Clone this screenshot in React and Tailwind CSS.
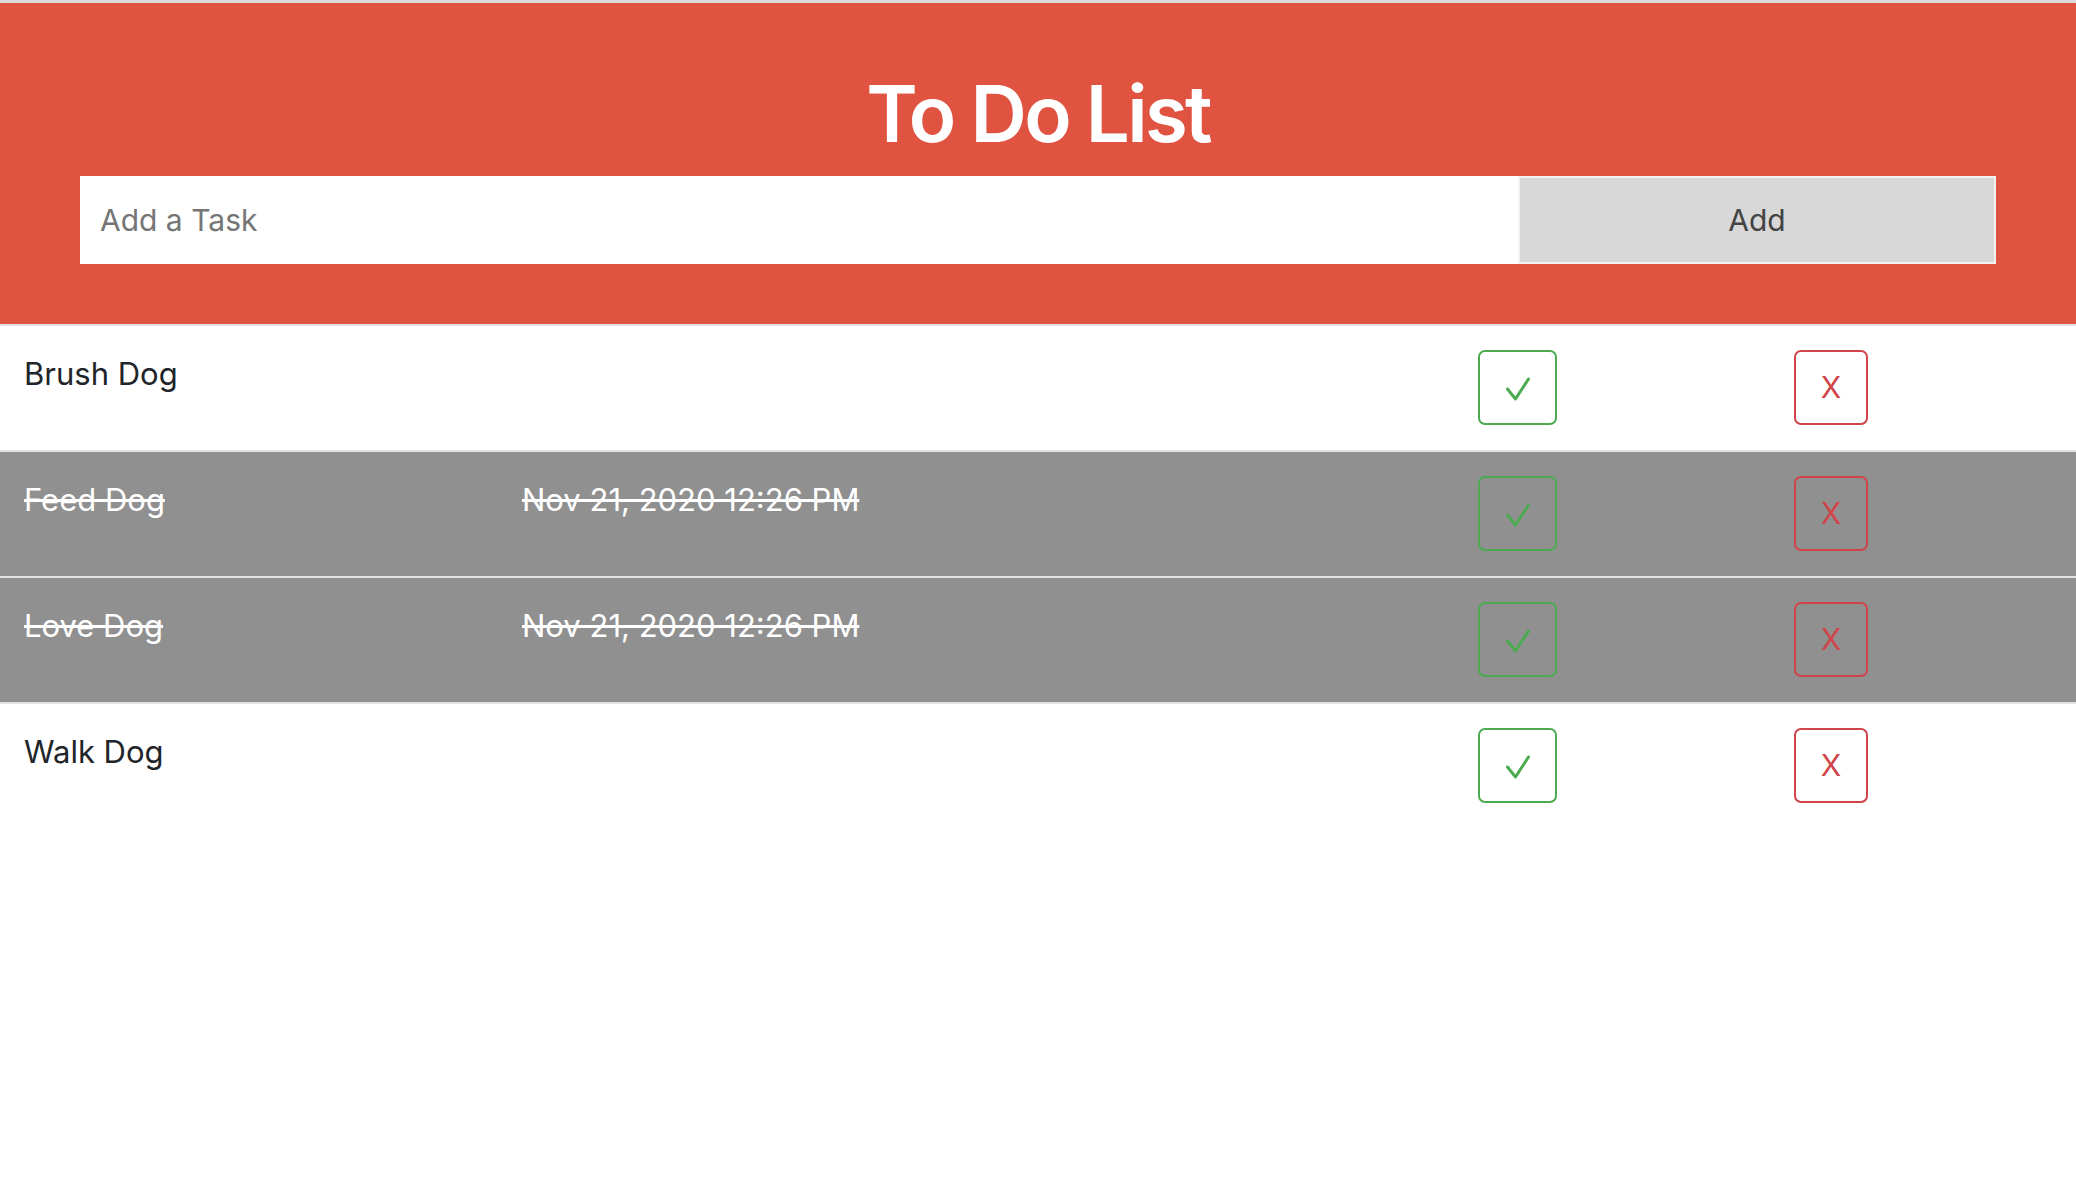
import React, { useState } from 'react';

const initialTasks = [
  { id: 1, text: 'Brush Dog', done: false, date: '' },
  { id: 2, text: 'Feed Dog', done: true, date: 'Nov 21, 2020 12:26 PM' },
  { id: 3, text: 'Love Dog', done: true, date: 'Nov 21, 2020 12:26 PM' },
  { id: 4, text: 'Walk Dog', done: false, date: '' },
];

const TaskRow = ({ task, onToggle, onDelete }) => (
  <div
    className={`grid grid-cols-[498px_956px_316px_1fr] h-[126px] border-t-2 border-[#dee2e6] pl-6 pt-6 ${
      task.done ? 'bg-[#909090] text-white' : 'bg-white text-[#212529]'
    }`}
  >
    <div className={`mt-[6px] text-[31px] leading-[36px] ${task.done ? 'line-through' : ''}`}>{task.text}</div>
    <div className={`mt-[6px] text-[31px] leading-[36px] ${task.done ? 'line-through' : ''}`}>{task.date}</div>
    <div>
      <button
        onClick={() => onToggle(task.id)}
        className="w-[79px] h-[75px] flex items-center justify-center border-2 border-[#4caa50] rounded-[7px]"
      >
        <svg width="24" height="24" viewBox="0 0 24 24" className="mt-[3px]">
          <polyline points="1.5,12 9.5,22 22.5,2" fill="none" stroke="#4caa50" strokeWidth="3" strokeLinecap="round" strokeLinejoin="round" />
        </svg>
      </button>
    </div>
    <div>
      <button
        onClick={() => onDelete(task.id)}
        className="w-[74px] h-[75px] flex items-center justify-center border-2 border-[#d0444a] rounded-[7px] text-[30px] text-[#d0444a] no-underline"
      >
        X
      </button>
    </div>
  </div>
);

const App = () => {
  const [tasks, setTasks] = useState(initialTasks);
  const [newTask, setNewTask] = useState('');

  const handleSubmit = (e) => {
    e.preventDefault();
    if (!newTask.trim()) return;
    setTasks([...tasks, { id: Date.now(), text: newTask, done: false, date: '' }]);
    setNewTask('');
  };

  const toggleTask = (id) => {
    setTasks(
      tasks.map((t) =>
        t.id === id
          ? {
              ...t,
              done: !t.done,
              date: !t.done ? new Date().toLocaleString('en-US', { month: 'short', day: 'numeric', year: 'numeric', hour: 'numeric', minute: '2-digit' }).replace(' at', '') : '',
            }
          : t
      )
    );
  };

  return (
    <div className="min-h-screen bg-white font-['Inter','Helvetica_Neue','Liberation_Sans',sans-serif]">
      {/* Header */}
      <div className="bg-[#e15341] border-t-[3px] border-[#dadada] pt-[71px] pb-[60px]">
        <h1 className="text-center text-white text-[78px] leading-[80px] font-semibold tracking-[-0.035em]">To Do List</h1>
        <form onSubmit={handleSubmit} className="flex mx-20 mt-[22px] h-[88px] bg-white">
          <input
            className="flex-1 h-full px-5 text-[30px] text-[#212529] placeholder:text-[#757575] outline-none bg-white"
            placeholder="Add a Task"
            value={newTask}
            onChange={(e) => setNewTask(e.target.value)}
          />
          <button type="submit" className="w-[478px] h-full bg-[#d8d8d8] border-2 border-[#f2f2f2] text-[30px] text-[#444]">
            Add
          </button>
        </form>
      </div>

      {/* Task list */}
      <div>
        {tasks.map((task) => (
          <TaskRow key={task.id} task={task} onToggle={toggleTask} onDelete={(id) => setTasks(tasks.filter((t) => t.id !== id))} />
        ))}
      </div>
    </div>
  );
};

export default App;
